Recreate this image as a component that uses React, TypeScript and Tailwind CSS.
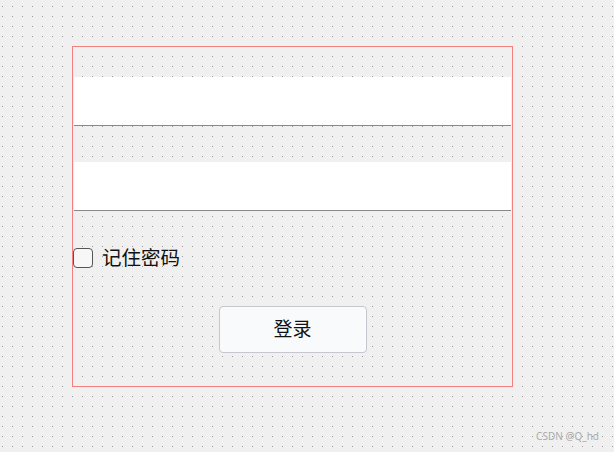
export default function App() {
  return (
    <div
      className="relative h-[452px] w-full overflow-hidden bg-[#9a9a9a] [background-image:linear-gradient(90deg,transparent_1px,#f0f0f0_1px),linear-gradient(180deg,transparent_1px,#f0f0f0_1px)] [background-size:10px_10px] [background-position:2px_6px] pt-[46px] pl-[72px]"
      style={{ fontFamily: '"Noto Sans", "Noto Sans CJK SC", sans-serif' }}
    >
      {/* 登录表单 */}
      <div className="flex h-[341px] w-[441px] flex-col border border-[#f47f7f]">
        <input className="mx-px mt-[30px] h-[49px] border-b border-[#888] bg-white px-3 outline-none" />
        <input
          type="password"
          className="mx-px mt-[36px] h-[49px] border-b border-[#888] bg-white px-3 outline-none"
        />

        <label className="mt-[37px] flex h-5 items-center">
          <span className="h-5 w-5 rounded-[4px] border border-[#555] bg-[#f7f7f7]" />
          <span className="ml-[9px] text-[19.5px] leading-5 text-[#111]">记住密码</span>
        </label>

        <div className="mt-[38px] flex justify-center">
          <button className="h-[47px] w-[148px] rounded-[4px] border border-[#c4c8ce] bg-[#f8fafc] text-[19px] text-[#111]">
            登录
          </button>
        </div>
      </div>

      <span className="absolute right-[15px] bottom-[8px] text-[10px] text-[#aaa]">CSDN @Q_hd</span>
    </div>
  );
}
